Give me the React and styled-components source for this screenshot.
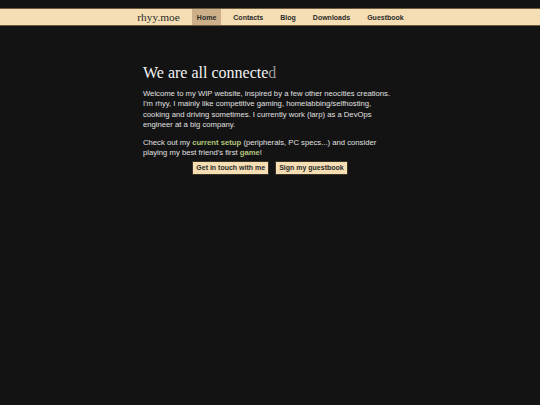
import React from "react";
import styled, { createGlobalStyle } from "styled-components";

const Global = createGlobalStyle`
  html, body { margin: 0; padding: 0; background: #131313; }
  body { font-family: "Liberation Sans", Arial, sans-serif; color: #e2e2e2; }
  #root { min-height: 405px; }
`;

const Page = styled.div`
  padding-top: 8px;
  min-height: 397px;
  background: #131313;
`;

const NavBar = styled.nav`
  background: #f5deb3;
  border-top: 1px solid #6b5a3e;
  border-bottom: 1px solid #6b5a3e;
  height: 16px;
  display: flex;
  justify-content: center;
  align-items: stretch;
  gap: 7px;
  padding-left: 6px;
`;

const Logo = styled.a`
  display: flex;
  align-items: center;
  margin-right: 5px;
  color: #2b2b2b;
  text-decoration: none;
  font-family: "Liberation Serif", "Times New Roman", serif;
  font-size: 11.4px;
  white-space: nowrap;
`;

const NavItem = styled.a`
  display: flex;
  align-items: center;
  padding: 0 5px;
  font-size: 7px;
  font-weight: bold;
  color: #2b2b2b;
  text-decoration: none;
  background: ${(p) => (p.$active ? "#cdb08a" : "transparent")};
`;

const Main = styled.main`
  width: 254px;
  margin: 0 auto;
  padding-top: 37px;
`;

const Title = styled.h1`
  margin: 0 0 6px;
  font-family: "Liberation Serif", "Times New Roman", serif;
  font-weight: normal;
  font-size: 16px;
  line-height: 20px;
  height: 20px;
  color: #f2f2f2;
  white-space: nowrap;
`;

const Cursor = styled.span`
  color: #9a9a9a;
`;

const Para = styled.p`
  margin: 0 0 ${(p) => (p.$last ? "3px" : "7px")};
  font-size: 7.7px;
  line-height: 10.4px;
  color: #e0e0e0;
`;

const Link = styled.a`
  color: #b3c47a;
  font-weight: bold;
  text-decoration: none;
`;

const Buttons = styled.div`
  display: flex;
  justify-content: center;
  gap: 6px;
`;

const Button = styled.button`
  background: #f5deb3;
  border: 1px solid #3b3226;
  height: 14px;
  padding: 0 3px;
  font-family: "Liberation Sans", Arial, sans-serif;
  font-size: 7px;
  font-weight: bold;
  color: #2b2b2b;
  cursor: pointer;
  line-height: 12px;
`;

export default function App() {
  return (
    <>
      <Global />
      <Page>
        <NavBar>
          <Logo href="#">rhyy.moe</Logo>
          <NavItem href="#" $active>Home</NavItem>
          <NavItem href="#">Contacts</NavItem>
          <NavItem href="#">Blog</NavItem>
          <NavItem href="#">Downloads</NavItem>
          <NavItem href="#">Guestbook</NavItem>
        </NavBar>
        <Main>
          <Title>
            We are all connecte<Cursor>d</Cursor>
          </Title>
          <Para>
            Welcome to my WIP website, inspired by a few other neocities creations. I'm rhyy, I
            mainly like competitive gaming, homelabbing/selfhosting, cooking and driving sometimes.
            I currently work (larp) as a DevOps engineer at a big company.
          </Para>
          <Para $last>
            Check out my <Link href="#">current setup</Link> (peripherals, PC specs...) and consider
            playing my best friend's first <Link href="#">game</Link>!
          </Para>
          <Buttons>
            <Button>Get in touch with me</Button>
            <Button>Sign my guestbook</Button>
          </Buttons>
        </Main>
      </Page>
    </>
  );
}
